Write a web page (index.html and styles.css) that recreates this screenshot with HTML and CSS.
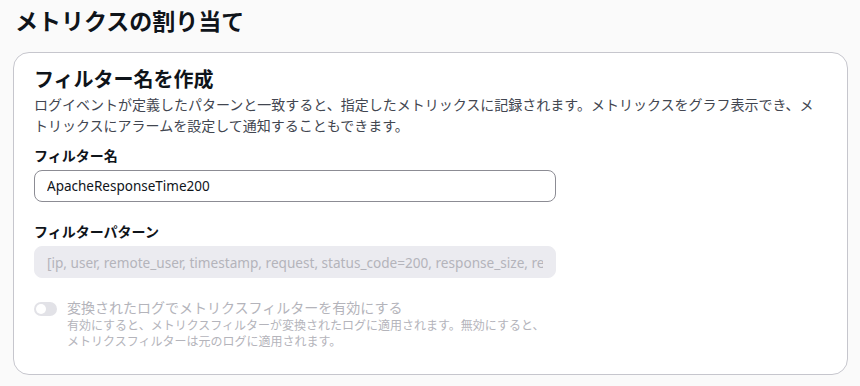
FILE: index.html
```html
<!DOCTYPE html>
<html lang="ja">
<head>
    <meta charset="UTF-8">
    <meta name="viewport" content="width=device-width, initial-scale=1.0">
    <title>メトリクスの割り当て</title>
    <link rel="stylesheet" href="styles.css">
</head>
<body>
    <div class="page">
        <h1 class="page-title">メトリクスの割り当て</h1>

        <div class="card">
            <div class="card-header">
                <h2>フィルター名を作成</h2>
                <p>ログイベントが定義したパターンと一致すると、指定したメトリックスに記録されます。メトリックスをグラフ表示でき、メトリックスにアラームを設定して通知することもできます。</p>
            </div>

            <div class="form-group">
                <label for="filterName">フィルター名</label>
                <input type="text" id="filterName" class="text-input" value="ApacheResponseTime200">
            </div>

            <div class="form-group">
                <label for="filterPattern">フィルターパターン</label>
                <input type="text" id="filterPattern" class="text-input" value="[ip, user, remote_user, timestamp, request, status_code=200, response_size, response_time]" disabled>
            </div>

            <div class="toggle-row">
                <span class="toggle"><span class="knob"></span></span>
                <div class="toggle-text">
                    <div class="toggle-label">変換されたログでメトリクスフィルターを有効にする</div>
                    <div class="toggle-hint">有効にすると、メトリクスフィルターが変換されたログに適用されます。無効にすると、<br>メトリクスフィルターは元のログに適用されます。</div>
                </div>
            </div>
        </div>
    </div>
</body>
</html>
```

FILE: styles.css
```css
* {
    margin: 0;
    padding: 0;
    box-sizing: border-box;
}

body {
    font-family: "Noto Sans", "Noto Sans CJK JP", sans-serif;
    background: #fafafa;
    color: #0f141a;
}

.page {
    padding: 5px 12px 0 13px;
}

.page-title {
    font-size: 23px;
    line-height: 32px;
    font-weight: 700;
    margin-bottom: 15px;
    padding-left: 2px;
}

.card {
    background: #ffffff;
    border: 1px solid #c6c6cd;
    border-radius: 16px;
    padding: 14px 20px 24px 20px;
}

.card-header {
    padding-right: 8px;
}

.card-header h2 {
    font-size: 20px;
    line-height: 26px;
    font-weight: 700;
}

.card-header p {
    font-size: 14px;
    line-height: 21px;
    color: #424650;
    margin-top: 1px;
}

.form-group {
    margin-top: 10px;
}

.form-group + .form-group {
    margin-top: 20px;
}

.form-group label {
    display: block;
    font-size: 14px;
    line-height: 20px;
    font-weight: 700;
    margin-bottom: 4px;
}

.text-input {
    display: block;
    width: 522px;
    height: 32px;
    padding: 0 12px;
    border: 1px solid #8c8c94;
    border-radius: 8px;
    font-family: "Noto Sans", "Noto Sans CJK JP", sans-serif;
    font-size: 13.5px;
    color: #0f141a;
    background: #ffffff;
}

.text-input:disabled {
    background: #ebebf0;
    border-color: #ebebf0;
    color: #b4b4bb;
    font-size: 13.6px;
}

.toggle-row {
    display: flex;
    gap: 10px;
    margin-top: 20px;
}

.toggle {
    width: 23px;
    height: 14px;
    margin-top: 4px;
    border-radius: 7px;
    background: #e2e2e7;
    position: relative;
    flex-shrink: 0;
}

.toggle .knob {
    position: absolute;
    top: 2px;
    left: 2px;
    width: 10px;
    height: 10px;
    border-radius: 50%;
    background: #ffffff;
}

.toggle-label {
    font-size: 14px;
    line-height: 20px;
    color: #b4b4bb;
}

.toggle-hint {
    font-size: 12px;
    line-height: 16px;
    color: #b4b4bb;
}
```
